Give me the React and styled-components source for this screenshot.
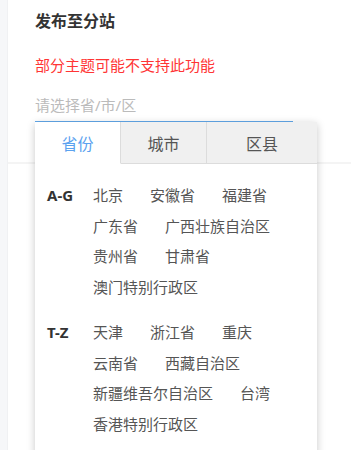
import styled, { createGlobalStyle } from 'styled-components';

const GlobalStyle = createGlobalStyle`
  html, body {
    margin: 0;
    padding: 0;
    background: #fff;
    font-family: "Noto Sans", "Noto Sans CJK SC", sans-serif;
  }
`;

const Page = styled.div`
  display: flex;
  min-height: 450px;
  overflow: hidden;
`;

const Sidebar = styled.div`
  width: 7px;
  flex-shrink: 0;
  background: #f6f7f9;
  border-right: 1px solid #f0f1f3;
`;

const Main = styled.div`
  flex: 1;
  background: #fff;
`;

const Section = styled.div`
  padding: 10px 0 0 27px;
  height: 152px;
  border-bottom: 2px solid #f4f4f4;
`;

const Title = styled.div`
  font-size: 16px;
  line-height: 22px;
  font-weight: bold;
  color: #333;
`;

const Warning = styled.div`
  margin-top: 22px;
  font-size: 15px;
  line-height: 22px;
  color: #ff3535;
`;

const Picker = styled.div`
  position: relative;
  margin-top: 18px;
  width: 258px;
`;

const Input = styled.div`
  font-size: 15px;
  line-height: 22px;
  padding-bottom: 5px;
  color: #bbb;
  border-bottom: 1px solid #62a8ea;
`;

const Panel = styled.div`
  position: absolute;
  top: 100%;
  left: 0;
  width: 282px;
  background: #fff;
  box-shadow: 0 2px 8px rgba(0, 0, 0, 0.22);
  z-index: 10;
`;

const Tabs = styled.div`
  display: flex;
  height: 42px;
`;

const Tab = styled.div`
  width: ${p => p.$w}px;
  flex: ${p => (p.$grow ? 1 : 'none')};
  display: flex;
  align-items: center;
  justify-content: center;
  font-size: 16px;
  color: ${p => (p.$active ? '#5ba2ef' : '#555')};
  background: ${p => (p.$active ? '#fff' : '#f0f0f0')};
  border-bottom: 1px solid ${p => (p.$active ? '#fff' : '#dcdcdc')};
  border-right: ${p => (p.$last ? 'none' : '1px solid #dcdcdc')};
`;

const Body = styled.div`
  padding: 16px 12px 30px 12px;
`;

const Group = styled.div`
  display: flex;
  align-items: flex-start;
  & + & {
    margin-top: 15px;
  }
`;

const Label = styled.div`
  width: 46px;
  flex-shrink: 0;
  font-size: 15px;
  line-height: 30px;
  font-weight: bold;
  color: #333;
`;

const Items = styled.div`
  display: flex;
  flex-wrap: wrap;
  flex: 1;
`;

const Item = styled.span`
  font-size: 15px;
  line-height: 30.5px;
  color: #555;
  margin-right: 27px;
  white-space: nowrap;
  cursor: pointer;
`;

const groups = [
  {
    label: 'A-G',
    items: ['北京', '安徽省', '福建省', '广东省', '广西壮族自治区', '贵州省', '甘肃省', '澳门特别行政区'],
  },
  {
    label: 'T-Z',
    items: ['天津', '浙江省', '重庆', '云南省', '西藏自治区', '新疆维吾尔自治区', '台湾', '香港特别行政区'],
  },
];

const App = () => (
  <>
    <GlobalStyle />
    <Page>
      <Sidebar />
      <Main>
        <Section>
          <Title>发布至分站</Title>
          <Warning>部分主题可能不支持此功能</Warning>
          <Picker>
            <Input>请选择省/市/区</Input>
            <Panel>
              <Tabs>
                <Tab $w={85} $active>省份</Tab>
                <Tab $w={85}>城市</Tab>
                <Tab $grow $last>区县</Tab>
              </Tabs>
              <Body>
                {groups.map(g => (
                  <Group key={g.label}>
                    <Label>{g.label}</Label>
                    <Items>
                      {g.items.map(name => (
                        <Item key={name}>{name}</Item>
                      ))}
                    </Items>
                  </Group>
                ))}
              </Body>
            </Panel>
          </Picker>
        </Section>
      </Main>
    </Page>
  </>
);

export default App;
